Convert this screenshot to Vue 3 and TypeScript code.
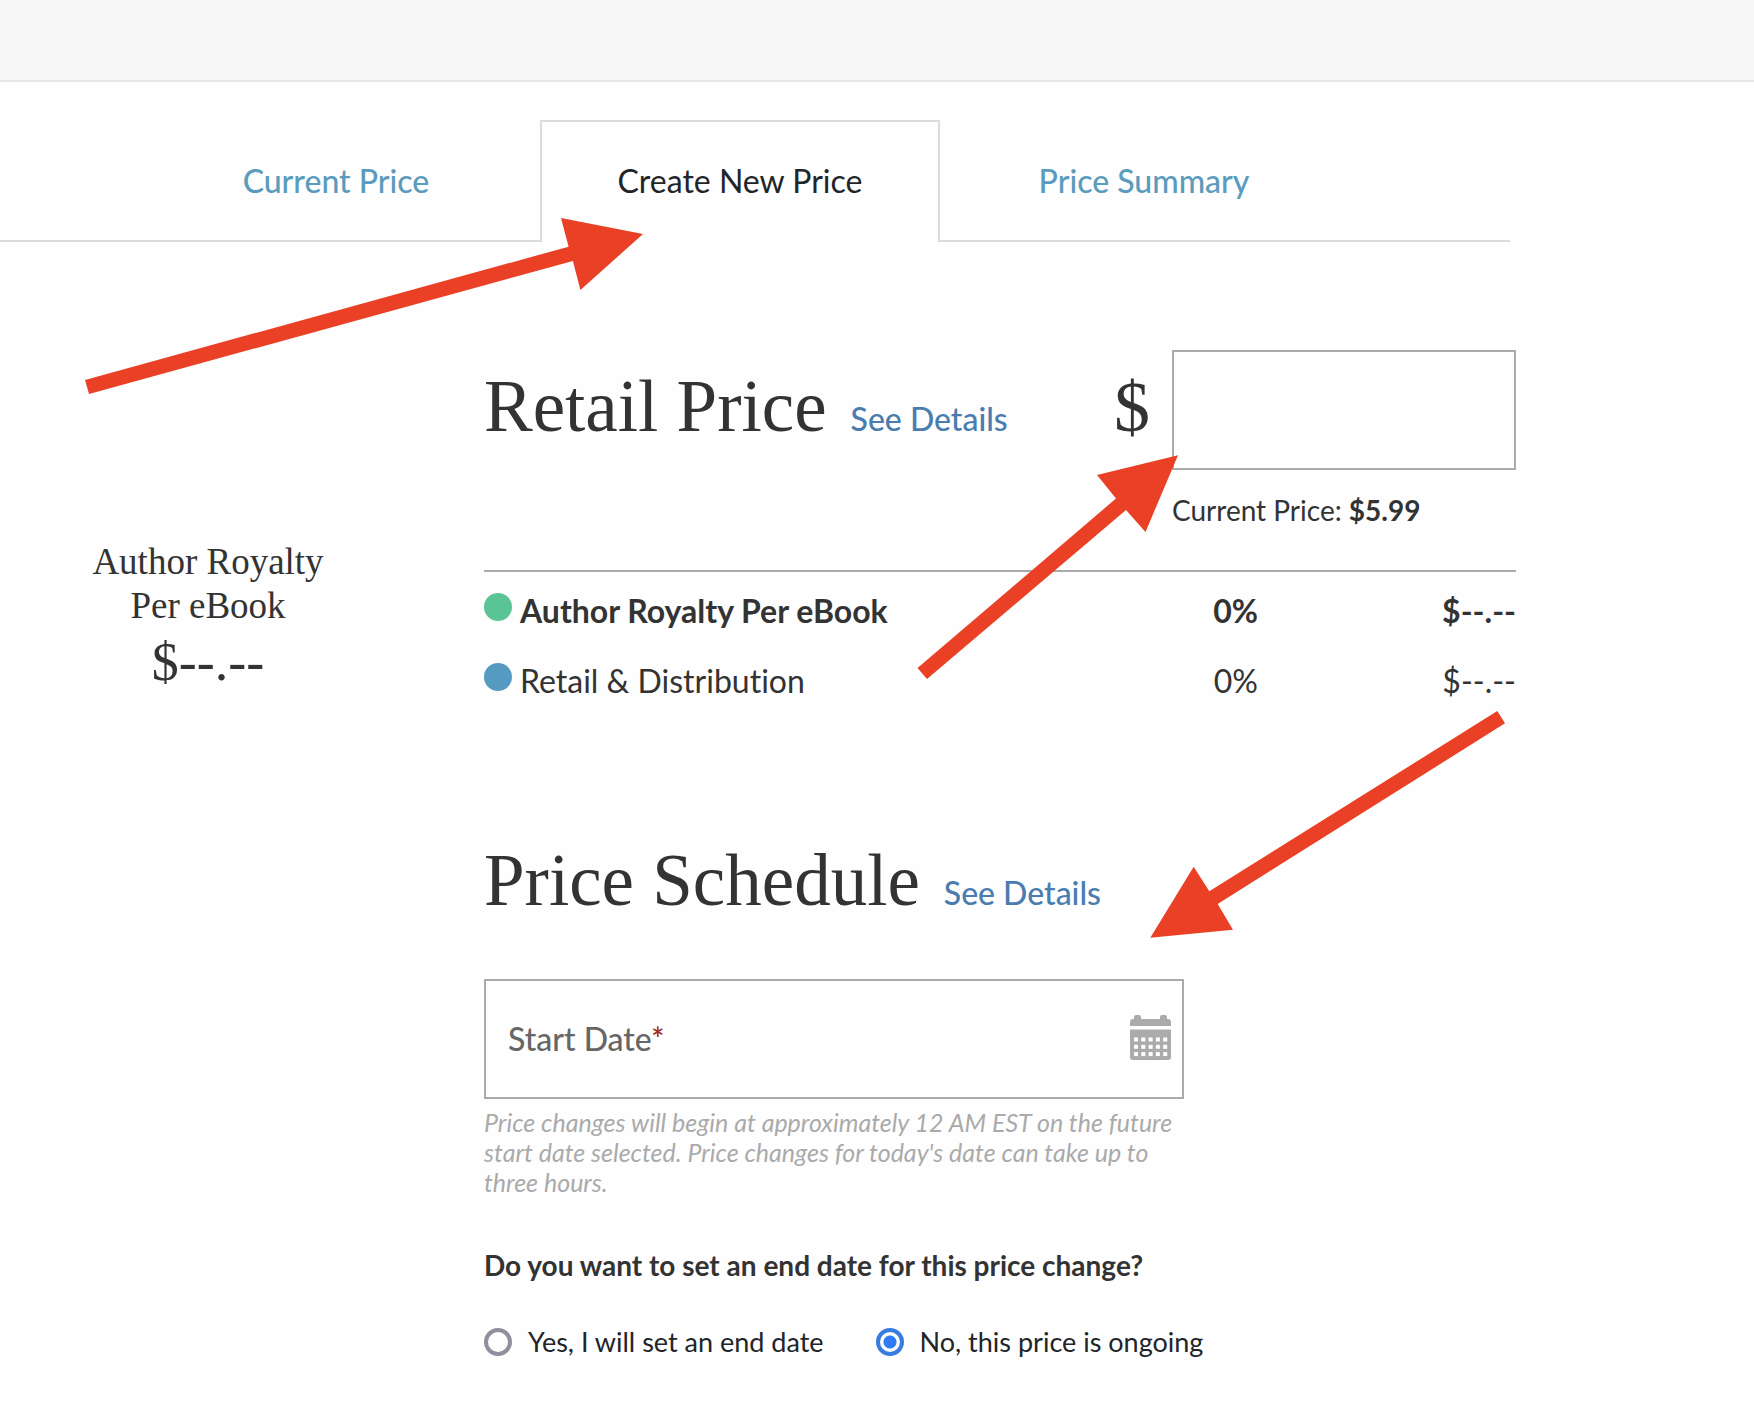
<script setup lang="ts">
import { ref } from 'vue'

interface Tab {
  id: string
  label: string
}

interface Share {
  name: string
  percent: string
  amount: string
  color: string
  strong: boolean
}

const tabs: Tab[] = [
  { id: 'current', label: 'Current Price' },
  { id: 'create', label: 'Create New Price' },
  { id: 'summary', label: 'Price Summary' },
]
const activeTab = ref('create')

const shares: Share[] = [
  { name: 'Author Royalty Per eBook', percent: '0%', amount: '$--.--', color: '#5bc496', strong: true },
  { name: 'Retail & Distribution', percent: '0%', amount: '$--.--', color: '#559bc1', strong: false },
]

const price = ref('')
const startDate = ref('')
const endDate = ref('no')

// Window cells of the calendar icon, five columns by three rows
const cells = [0, 1, 2].flatMap((row) => [0, 1, 2, 3, 4].map((col) => ({ x: 4 + col * 7.3, y: 22.5 + row * 7.3 })))

// Callout arrows: outline of shaft and head
const arrows: string[] = [
  '85,380 568.6,246.7 561,218 643,234 580.4,290 572.9,261 89,394',
  '917.5,668 1116,498.5 1097,475 1178,455.3 1145.5,532 1126,510 927,679',
  '1497.3,711 1209.3,891.3 1193.7,866.7 1150.3,937.7 1233,929.7 1217.7,904 1505,723.3',
]
</script>

<template>
  <div class="page">
    <header class="topbar"></header>

    <nav class="tabs" aria-label="Pricing">
      <a
        v-for="tab in tabs"
        :key="tab.id"
        href="#"
        class="tab"
        :class="{ active: tab.id === activeTab }"
        @click.prevent="activeTab = tab.id"
        >{{ tab.label }}</a
      >
    </nav>

    <main class="content">
      <aside class="royalty">
        <div class="royalty-label">Author Royalty<br />Per eBook</div>
        <div class="royalty-value">$--.--</div>
      </aside>

      <div class="form">
        <section class="retail">
          <div class="retail-row">
            <div class="title">
              <h2>Retail Price</h2>
              <a href="#" class="details">See Details</a>
            </div>
            <label class="dollar" for="price">$</label>
            <input id="price" v-model="price" class="price-input" type="text" />
          </div>
          <p class="current">Current Price: <strong>$5.99</strong></p>

          <table class="shares">
            <tbody>
              <tr v-for="share in shares" :key="share.name" :class="{ strong: share.strong }">
                <td>
                  <span class="name"><i class="dot" :style="{ background: share.color }"></i>{{ share.name }}</span>
                </td>
                <td class="percent">{{ share.percent }}</td>
                <td class="amount">{{ share.amount }}</td>
              </tr>
            </tbody>
          </table>
        </section>

        <section class="schedule">
          <div class="title">
            <h2>Price Schedule</h2>
            <a href="#" class="details">See Details</a>
          </div>

          <div class="date-box">
            <label for="start">Start Date<span class="star">*</span></label>
            <input id="start" v-model="startDate" type="text" />
            <button type="button" class="calendar" aria-label="Choose date">
              <svg width="41" height="45" viewBox="0 0 41 45">
                <path
                  fill="#ababab"
                  d="M0 11V7a3 3 0 0 1 3-3h1V2a2 2 0 0 1 2-2h3a2 2 0 0 1 2 2v2h19V2a2 2 0 0 1 2-2h3a2 2 0 0 1 2 2v2h1a3 3 0 0 1 3 3v4zM0 14.500H41V42a3 3 0 0 1-3 3H3a3 3 0 0 1-3-3z"
                />
                <rect v-for="(c, i) in cells" :key="i" :x="c.x" :y="c.y" width="4" height="4" fill="#fff" />
              </svg>
            </button>
          </div>
          <p class="hint">
            Price changes will begin at approximately 12 AM EST on the future start date selected. Price changes for
            today's date can take up to three hours.
          </p>

          <fieldset class="ending">
            <legend>Do you want to set an end date for this price change?</legend>
            <div class="options">
              <label><input v-model="endDate" type="radio" name="end" value="yes" />Yes, I will set an end date</label>
              <label><input v-model="endDate" type="radio" name="end" value="no" />No, this price is ongoing</label>
            </div>
          </fieldset>
        </section>
      </div>
    </main>

    <svg class="callouts" width="1754" height="1416" aria-hidden="true">
      <polygon v-for="points in arrows" :key="points" :points="points" fill="#ea4025" />
    </svg>
  </div>
</template>

<style>
body {
  margin: 0;
  background: #fefefe;
}
</style>

<style scoped>
.page {
  position: relative;
  overflow: hidden;
  padding-bottom: 54px;
  color: #333;
  font-family: Lato, 'Liberation Sans', sans-serif;
  font-size: 32px;
  font-variant-ligatures: none;
  line-height: 40px;
}

.topbar {
  height: 80px;
  background: #f7f7f7;
  border-bottom: 2px solid #e8e8e8;
}

.tabs {
  display: flex;
  justify-content: center;
  gap: 4px;
  box-sizing: border-box;
  max-width: 1510px;
  margin-top: 38px;
  padding-right: 30px;
  border-bottom: 2px solid #dcdcdc;
}

.tab {
  box-sizing: border-box;
  width: 400px;
  height: 122px;
  margin-bottom: -2px;
  padding-top: 39px;
  border: 2px solid transparent;
  border-bottom: 0;
  color: #5b9bbd;
  text-align: center;
  text-decoration: none;
  font-weight: 500;
}

.tab.active {
  border-color: #dcdcdc;
  background: #fefefe;
  color: #212529;
  font-weight: 400;
}

.content {
  display: grid;
  grid-template-columns: 416px minmax(0, 1fr);
  gap: 68px;
  max-width: 1516px;
  padding-top: 108px;
}

.royalty {
  padding-top: 190px;
  font-family: 'Liberation Serif', serif;
  text-align: center;
}

.royalty-label {
  font-size: 37px;
  line-height: 44px;
}

.royalty-value {
  font-size: 54px;
  line-height: 68px;
}

.retail-row {
  display: flex;
}

.title {
  display: flex;
  flex: 1;
  align-items: baseline;
  gap: 24px;
}

h2 {
  margin: 0;
  font: 400 73px/80px 'Liberation Serif', serif;
}

.details {
  color: #4a7cb0;
  font-weight: 500;
  text-decoration: none;
}

.retail .title {
  padding-top: 17px;
}

.dollar {
  padding: 17px 22px 0 0;
  font: 400 72px/80px 'Liberation Serif', serif;
}

.price-input {
  box-sizing: border-box;
  width: 344px;
  height: 120px;
  padding: 0 24px;
  border: 2px solid #aaa;
  border-radius: 0;
  background: transparent;
  font: inherit;
}

.current {
  box-sizing: border-box;
  width: 344px;
  margin: 21px 0 41px auto;
  font-size: 28px;
  line-height: 38px;
}

.shares {
  width: 100%;
  border-top: 2px solid #aaa;
  border-spacing: 0;
  table-layout: fixed;
}

.shares td {
  height: 40px;
  padding: 19px 0 11px;
}

.strong {
  font-weight: 700;
}

.name {
  display: flex;
  gap: 8px;
}

.dot {
  width: 28px;
  height: 28px;
  margin-top: 2px;
  border-radius: 50%;
}

.shares td:first-child {
  width: 60%;
}

.percent {
  text-align: right;
  width: 15%;
}

.amount {
  text-align: right;
}

.schedule .title {
  margin-top: 129px;
}

.date-box {
  display: flex;
  align-items: center;
  box-sizing: border-box;
  max-width: 700px;
  height: 120px;
  margin-top: 58px;
  padding: 0 11px 0 22px;
  border: 2px solid #aaa;
}

.date-box label {
  color: #666;
  font-weight: 500;
}

.star {
  color: #a5281b;
}

.date-box input {
  flex: 1;
  min-width: 0;
  height: 100%;
  box-sizing: border-box;
  border: 0;
  background: transparent;
  font: inherit;
}

.date-box input,
.price-input {
  outline: 0;
}

.calendar {
  display: flex;
  padding: 0 0 4px;
  border: 0;
  background: none;
}

.hint {
  max-width: 700px;
  margin: 8px 0 0;
  color: #aaa;
  font-size: 25px;
  font-style: italic;
  line-height: 30px;
}

.ending {
  margin: 48px 0 0;
  padding: 0;
  border: 0;
}

.ending legend {
  padding: 0;
  font-size: 28px;
  font-weight: 700;
}

.options {
  display: flex;
  gap: 52px;
  margin-top: 37px;
  color: #212529;
  font-size: 27px;
}

.options label {
  display: flex;
  align-items: center;
  gap: 16px;
}

.options input {
  appearance: none;
  box-sizing: border-box;
  width: 28px;
  height: 28px;
  margin: 0;
  border: 4px solid #8f8f9d;
  border-radius: 50%;
  background: #fff;
}

.options input:checked {
  border-color: #387ce0;
  background: radial-gradient(circle, #2f7cf6 6px, #fff 7px);
}

.callouts {
  position: absolute;
  top: 0;
  left: 0;
  pointer-events: none;
}
</style>
